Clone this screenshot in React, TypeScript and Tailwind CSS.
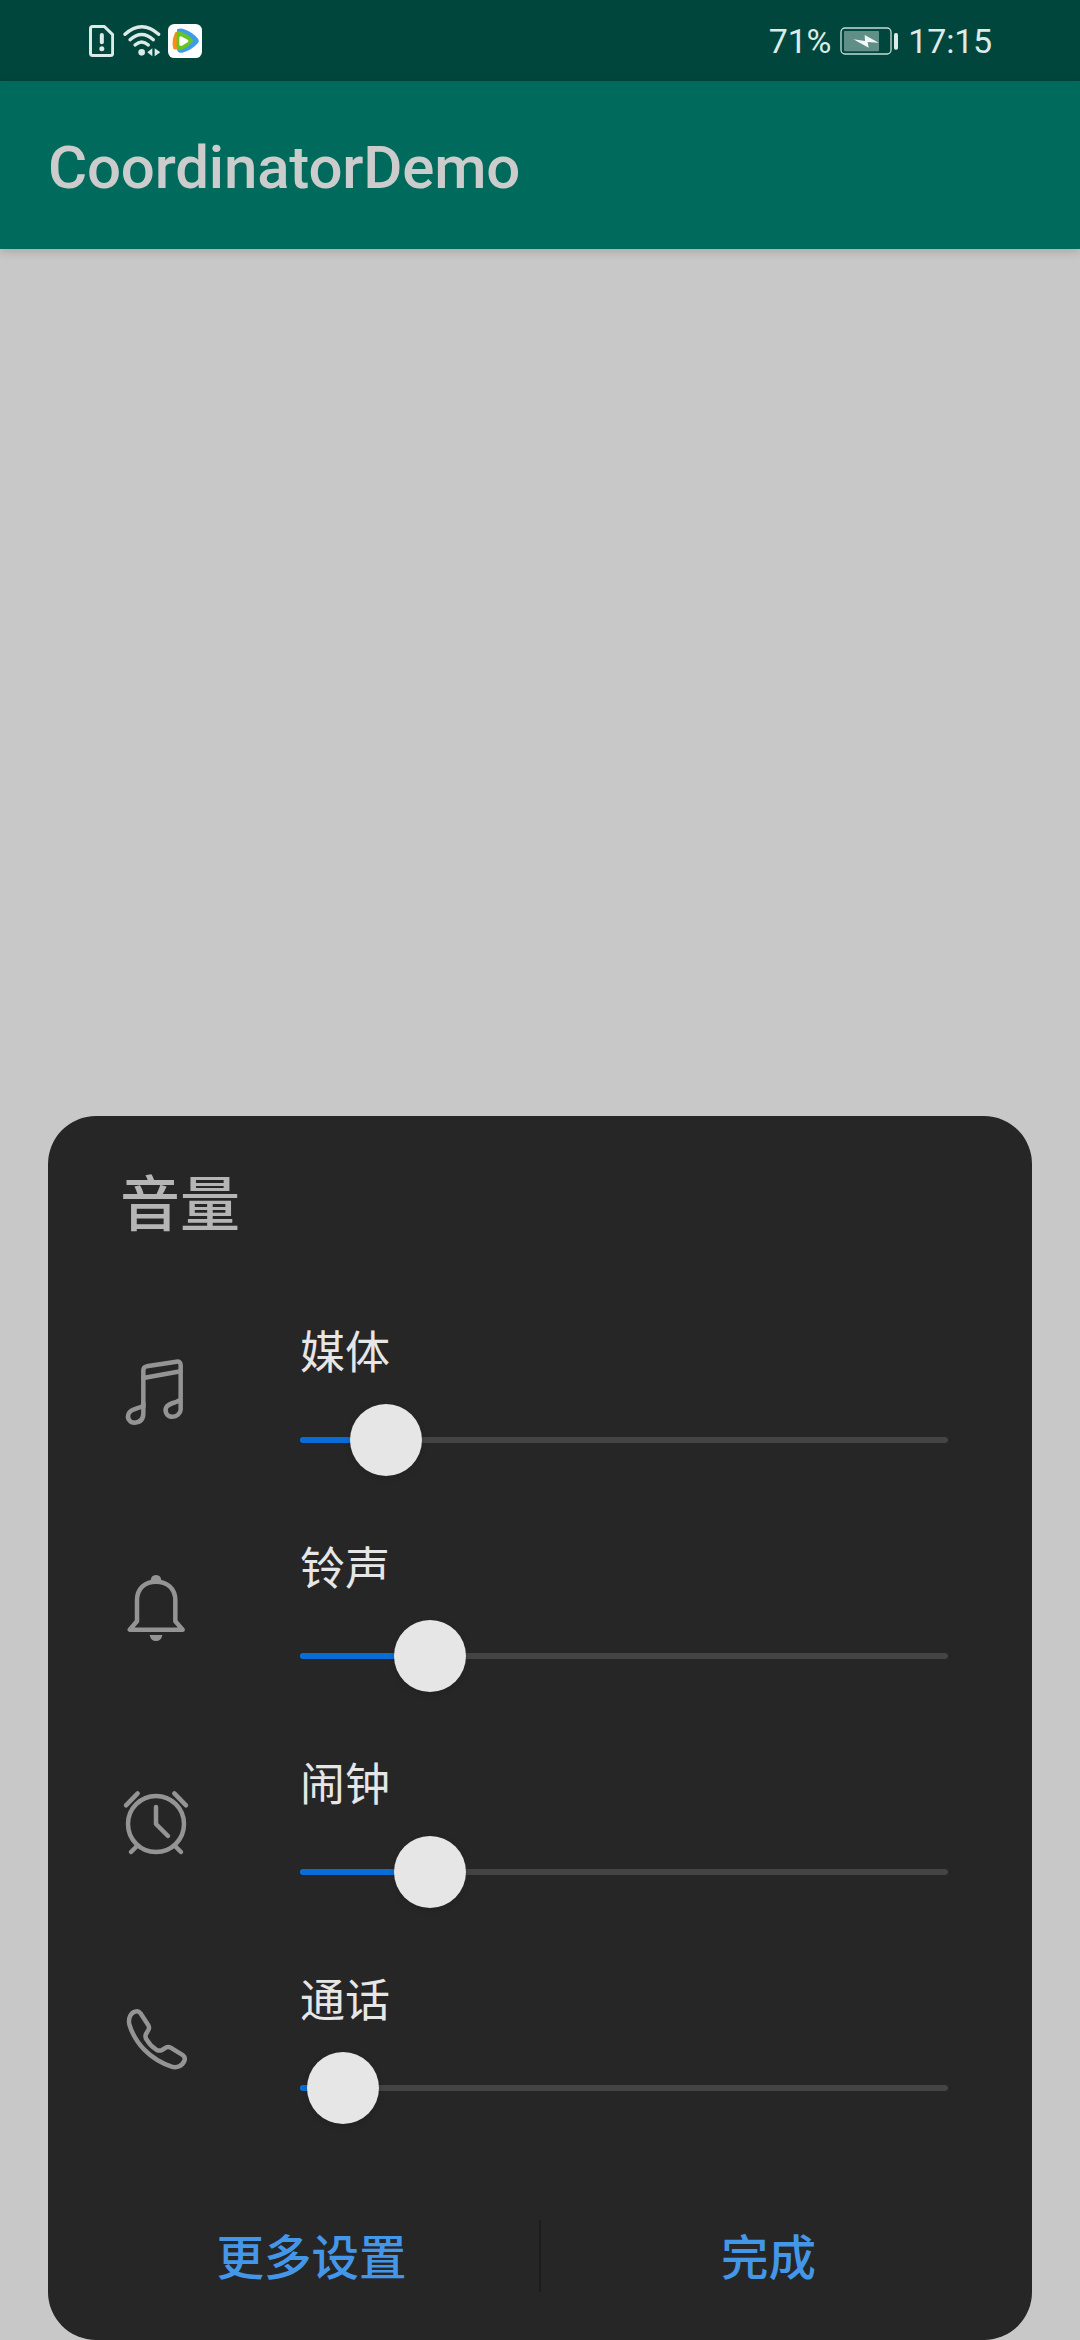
import React from 'react';

function SimAlertIcon() {
  return (
    <svg className="h-8 w-[25px]" viewBox="57 43 75 96" fill="none" stroke="#dcebe8">
      <path d="M68 47.500H103L128 72V128Q128 134.500 122 134.500H68Q61.500 134.500 61.500 128V54Q61.500 47.500 68 47.500Z" strokeWidth="9" strokeLinejoin="round" />
      <path d="M95.500 73V95" strokeWidth="12" strokeLinecap="round" />
      <circle cx="95.500" cy="114" r="7.500" fill="#dcebe8" stroke="none" />
    </svg>
  );
}

function WifiIcon() {
  return (
    <svg className="ml-[9px] h-8 w-[38px]" viewBox="159 43 114 96" fill="none" stroke="#dcebe8" strokeWidth="10" strokeLinecap="round">
      <path d="M165 71Q215 26 266 71" />
      <path d="M180 87Q215 56 250 87" />
      <path d="M195 103Q215 85 235 103" />
      <circle cx="215" cy="125" r="10" fill="#dcebe8" stroke="none" />
      <path d="M247 113V137L232 125Z M254 113V137L271 125Z" fill="#dcebe8" stroke="none" />
    </svg>
  );
}

function VideoAppIcon() {
  return (
    <svg className="ml-[7px] h-[34px] w-[34px]" viewBox="294 42 102 102">
      <rect x="294" y="42" width="102" height="102" rx="19" fill="#fff" />
      <path d="M321 58Q330 54 341 57Q367 66 384 86Q389 92 384 99Q365 121 337 128Q324 130 321 119Z" fill="#3d9be9" />
      <path d="M316 67Q303 92 310 116Q318 122 330 114V66Q322 62 316 67Z" fill="#ff8a1c" />
      <path d="M320 66Q326 62 336 67Q357 76 367 88Q371 92 367 97Q354 112 333 120Q322 123 320 113Z" fill="#66c51f" />
      <path d="M328 83Q329 77 336 80L354 90Q357 93 354 96L336 107Q329 109 328 104Z" fill="#fff" />
    </svg>
  );
}

function BatteryIcon() {
  return (
    <svg className="ml-[9px] h-7 w-[59px]" viewBox="269 49 177 84">
      <rect x="272" y="52" width="150" height="78" rx="12" fill="none" stroke="#c3dad5" strokeWidth="4" />
      <rect x="281" y="61" width="105" height="61" rx="3" fill="#5f8f86" />
      <rect x="431" y="67" width="12" height="50" rx="5" fill="#dcebe8" />
      <path d="M309 86L344 91L343 73L385 96L352 94L355 111Z" fill="#f2f8f7" />
    </svg>
  );
}

const iconClass = 'mt-12 h-[72px] w-[72px] shrink-0';
const iconStroke = {
  fill: 'none',
  stroke: '#949494',
  strokeWidth: 13.5,
  strokeLinecap: 'round' as const,
  strokeLinejoin: 'round' as const,
};

function MusicIcon() {
  return (
    <svg className={iconClass} viewBox="60 138 216 216" {...iconStroke}>
      <path d="M130 290V181Q130 171 140 169L229 155Q242 153 242 166V299A25 22 0 0 1 217 320C200 321 192 303 200 290C209 278 236 278 242 266" />
      <path d="M130 204L242 184" />
      <path d="M130 285C124 296 97 293 87 309C79 323 88 338 104 338Q130 337 130 310V280" />
    </svg>
  );
}

function BellIcon() {
  return (
    <svg className={iconClass} viewBox="60 126 216 216" {...iconStroke}>
      <path d="M89 299H248L226 274V211C226 174 200 155 168 155C136 155 111 174 111 211V274Z" />
      <path d="M152 153Q152 135 168 135Q184 135 184 153Z" fill="#949494" stroke="none" />
      <path d="M149 315H187Q184 333 168 333Q152 333 149 315Z" fill="#949494" stroke="none" />
    </svg>
  );
}

function ClockIcon() {
  return (
    <svg className={iconClass} viewBox="60 144 216 216" {...iconStroke}>
      <circle cx="168" cy="252" r="84" />
      <path d="M168 201V252L204 288M78 196L113 160M223 160L258 196M111 318L93 336M225 318L243 336" />
    </svg>
  );
}

function PhoneIcon() {
  return (
    <svg className={iconClass} viewBox="60 132 216 216" {...iconStroke}>
      <path d="M121 159L145 196Q149 203 145 210L138 222Q134 230 140 239Q151 258 169 269Q178 274 186 270L199 262Q205 259 212 263L246 284Q256 290 254 300C249 316 233 325 215 320C150 298 105 250 88 193C84 174 92 159 105 155Q115 151 121 159Z" />
    </svg>
  );
}

const channels = [
  { label: '媒体', value: 86, Icon: MusicIcon },
  { label: '铃声', value: 130, Icon: BellIcon },
  { label: '闹钟', value: 130, Icon: ClockIcon },
  { label: '通话', value: 43, Icon: PhoneIcon },
];

function Slider({ value }: { value: number }) {
  return (
    <div className="flex h-[72px] w-[648px] items-center">
      <div className="relative h-1.5 w-full rounded-full bg-[#444444]">
        <div className="h-full rounded-full bg-[#0a6cd6]" style={{ width: value }} />
        <div
          className="absolute -top-[33px] h-[72px] w-[72px] rounded-full bg-[#e6e6e6] shadow-[0_2px_6px_rgba(0,0,0,0.14)]"
          style={{ left: value - 36 }}
        />
      </div>
    </div>
  );
}

export default function App() {
  return (
    <div className={`flex h-[2340px] w-[1080px] flex-col overflow-hidden bg-[#c8c8c8] font-["Roboto","Noto_Sans_CJK_SC",sans-serif]`}>
      <div className="flex h-[81px] shrink-0 items-center justify-between bg-[#00463c] pr-[88px] pl-[89px] text-[34px] leading-10 text-[#dcebe8]">
        <div className="flex items-center">
          <SimAlertIcon />
          <WifiIcon />
          <VideoAppIcon />
        </div>
        <div className="flex items-center">
          <span className="tracking-[-0.2px]">71%</span>
          <BatteryIcon />
          <span className="ml-[9px] tracking-[-0.2px]">17:15</span>
        </div>
      </div>

      <header className="z-10 flex h-[168px] shrink-0 items-center bg-[#006b5d] pt-[5px] pl-12 shadow-[0_2px_10px_rgba(0,0,0,0.18)]">
        <h1 className="text-[60px] leading-[70px] font-medium tracking-[-0.18px] text-[#cccccc]">CoordinatorDemo</h1>
      </header>

      <section className="mx-12 mt-auto flex h-[1224px] flex-col rounded-[48px] bg-[#262626]">
        <h2 className="mt-[45px] ml-[72px] text-[60px] leading-[90px] font-medium text-[#b5b5b5]">音量</h2>
        <div className="mt-[57px] flex flex-col">
          {channels.map(({ label, value, Icon }) => (
            <div key={label} className="flex h-[216px] pl-[72px]">
              <Icon />
              <div className="ml-[108px] flex flex-col">
                <span className="mt-3 h-[84px] text-[45px] leading-[68px] text-[#e6e6e6]">{label}</span>
                <Slider value={value} />
              </div>
            </div>
          ))}
        </div>
        <div className="mt-12 flex h-[72px] items-center px-9 text-[47.5px] leading-[72px] font-medium text-[#4497e8]">
          <button className="flex-1 pt-1.5">更多设置</button>
          <div className="h-[72px] w-0.5 bg-[#1d1d1d]" />
          <button className="flex-1 pt-1.5">完成</button>
        </div>
      </section>
    </div>
  );
}
